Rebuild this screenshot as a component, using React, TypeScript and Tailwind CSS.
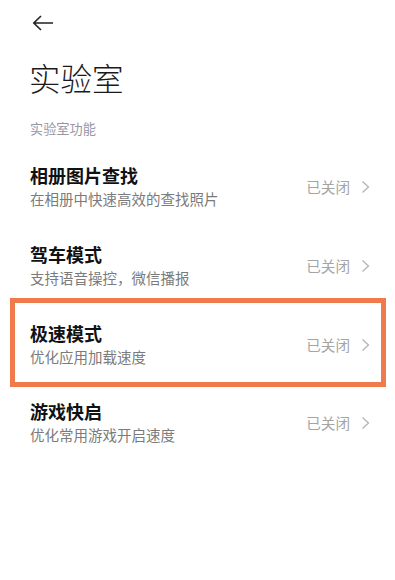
import React from 'react';

const font = '"Noto Sans CJK SC", "Noto Sans", sans-serif';

interface LabItem {
  title: string;
  desc: string;
  highlight?: boolean;
}

const items: LabItem[] = [
  { title: '相册图片查找', desc: '在相册中快速高效的查找照片' },
  { title: '驾车模式', desc: '支持语音操控，微信播报' },
  { title: '极速模式', desc: '优化应用加载速度', highlight: true },
  { title: '游戏快启', desc: '优化常用游戏开启速度' },
];

const Row: React.FC<{ item: LabItem }> = ({ item }) => (
  <div className="relative flex h-[78.7px] items-center justify-between pl-[30px] pr-[25px]">
    <div className="flex flex-col">
      <span className="text-[18px] font-bold leading-[23px] text-[#111111]">{item.title}</span>
      <span className="text-[14.5px] leading-[23px] text-[#7b7b7b]">{item.desc}</span>
    </div>
    <div className="flex items-center gap-[11px]">
      <span className="text-[14.6px] text-[#a4a4a4]">已关闭</span>
      <svg width="9" height="14" viewBox="0 0 9 14" fill="none">
        <polyline points="1.5,1.5 7.5,7 1.5,12.5" stroke="#b4b4b4" strokeWidth="1.3" />
      </svg>
    </div>
    {item.highlight && (
      <div className="pointer-events-none absolute left-[10px] right-[9px] top-[-7px] bottom-[-3px] border-[5px] border-[#ef7a4b]" />
    )}
  </div>
);

export default function App() {
  return (
    <div className="h-[580px] w-[395px] bg-white" style={{ fontFamily: font }}>
      <div className="flex h-[46px] items-center pl-[32px]">
        <svg width="22" height="16" viewBox="0 0 22 16" fill="none">
          <path d="M21 8H1.8M9 1L1.8 8L9 15" stroke="#222222" strokeWidth="1.6" />
        </svg>
      </div>
      <div className="flex h-[64px] items-center pl-[29px]">
        <span className="text-[31.5px] font-light leading-none tracking-[0px] text-[#1a1a1a]">实验室</span>
      </div>
      <div className="flex h-[38px] items-center pl-[30px]">
        <span className="text-[13.2px] text-[#9797a3]">实验室功能</span>
      </div>
      <div className="flex flex-col">
        {items.map((item) => (
          <Row key={item.title} item={item} />
        ))}
      </div>
    </div>
  );
}
